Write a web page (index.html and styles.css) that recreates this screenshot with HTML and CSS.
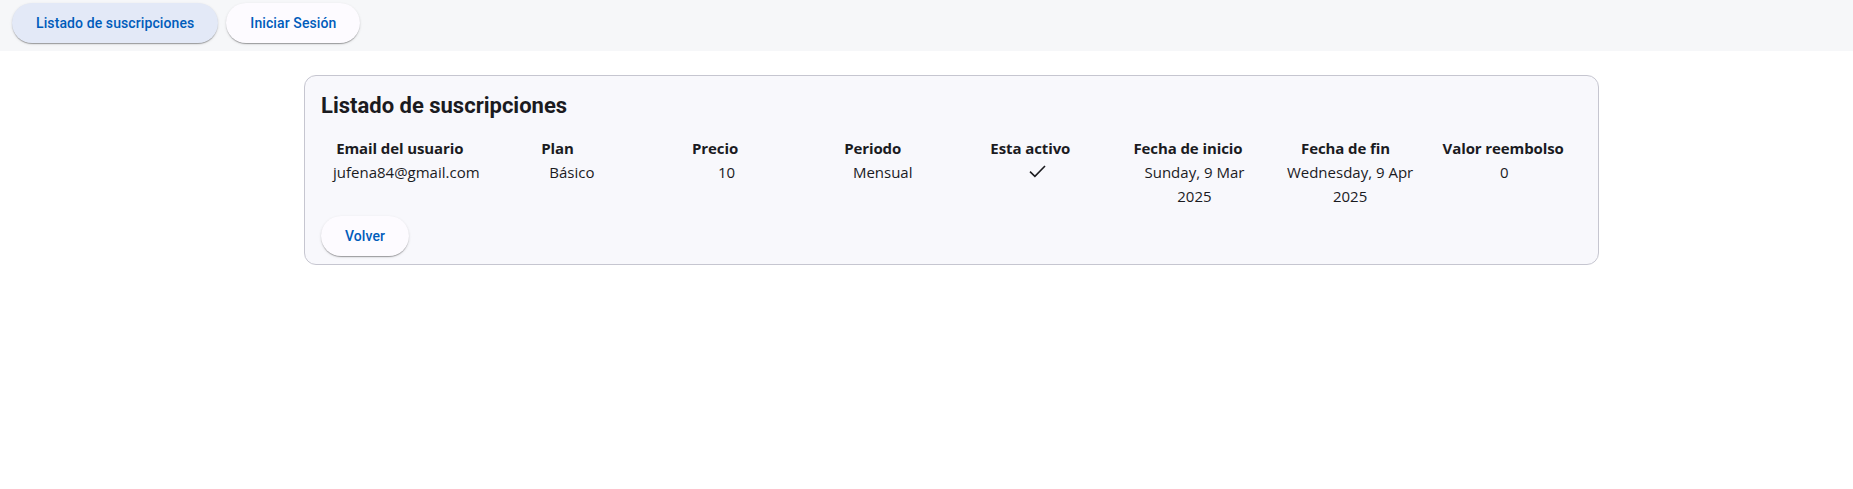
FILE: index.html
```html
<!DOCTYPE html>
<html lang="es">
<head>
<meta charset="utf-8">
<title>Listado de suscripciones</title>
<link rel="stylesheet" href="styles.css">
</head>
<body>
<nav class="toolbar">
  <button class="btn btn-active">Listado de suscripciones</button>
  <button class="btn">Iniciar Sesión</button>
</nav>
<main class="main">
  <section class="card">
    <h2 class="card-title">Listado de suscripciones</h2>
    <table class="subs">
      <thead>
        <tr>
          <th>Email del usuario</th>
          <th>Plan</th>
          <th>Precio</th>
          <th>Periodo</th>
          <th>Esta activo</th>
          <th>Fecha de inicio</th>
          <th>Fecha de fin</th>
          <th>Valor reembolso</th>
        </tr>
      </thead>
      <tbody>
        <tr>
          <td class="c-email">jufena84@gmail.com</td>
          <td class="c-plan">Básico</td>
          <td class="c-precio">10</td>
          <td class="c-periodo">Mensual</td>
          <td class="c-activo"><svg class="check" width="17" height="13" viewBox="0 0 17 13"><path d="M1 6.6 L5.9 11.4 L16 1" fill="none" stroke="#1b1b1f" stroke-width="1.6"/></svg></td>
          <td class="c-inicio"><span class="date">Sunday, 9 Mar 2025</span></td>
          <td class="c-fin"><span class="date">Wednesday, 9 Apr 2025</span></td>
          <td class="c-valor">0</td>
        </tr>
      </tbody>
    </table>
    <div class="actions">
      <button class="btn">Volver</button>
    </div>
  </section>
</main>
</body>
</html>
```
FILE: styles.css
```css
html, body {
  margin: 0;
  padding: 0;
  background: #ffffff;
}

body {
  font-family: "Open Sans", "Noto Sans", sans-serif;
  color: #1b1b1f;
}

.toolbar {
  display: flex;
  gap: 8px;
  align-items: flex-start;
  height: 51px;
  box-sizing: border-box;
  padding: 3px 12px 0 12px;
  background: #f6f7f9;
}

.btn {
  height: 40px;
  padding: 0 24px;
  border: none;
  border-radius: 20px;
  background: #fdfbff;
  color: #005cbb;
  font-family: Roboto, "Liberation Sans", sans-serif;
  font-size: 14px;
  font-weight: 500;
  letter-spacing: 0.1px;
  box-shadow: 0 2px 1px -1px rgba(0,0,0,.2), 0 1px 1px 0 rgba(0,0,0,.14), 0 1px 3px 0 rgba(0,0,0,.12);
  cursor: pointer;
}

.btn-active {
  background: #e3e9f7;
}

.main {
  display: flex;
  justify-content: center;
  padding: 24px 0 0 50px;
}

.card {
  width: 1295px;
  box-sizing: border-box;
  padding: 16px 16px 8px 16px;
  background: #f8f8fc;
  border: 1px solid #c6c6d0;
  border-radius: 12px;
}

.card-title {
  margin: 0;
  font-family: Roboto, "Liberation Sans", sans-serif;
  font-size: 22px;
  font-weight: 700;
  line-height: 28px;
  color: #1b1b1f;
}

.subs {
  width: 100%;
  margin-top: 16px;
  border-collapse: collapse;
  table-layout: fixed;
  font-size: 15px;
  line-height: 24px;
}

.subs th,
.subs td {
  padding: 0;
  text-align: center;
  vertical-align: top;
}

.subs th {
  font-weight: 700;
  white-space: nowrap;
  letter-spacing: -0.1px;
}

.subs td {
  font-weight: 400;
  color: #1b1b1f;
}

.c-email { padding-left: 12px !important; }
.c-plan { padding-left: 29px !important; }
.c-precio { padding-left: 23px !important; }
.c-periodo { padding-left: 20px !important; }
.c-activo { padding-left: 15px !important; }
.c-inicio { padding-left: 13px !important; }
.c-fin { padding-left: 9px !important; }
.c-valor { padding-left: 2px !important; }

.check {
  display: inline-block;
  vertical-align: middle;
  margin-top: -4px;
}

.date {
  display: inline-block;
  max-width: 138px;
}

.actions {
  display: flex;
  margin-top: 8px;
}
```
